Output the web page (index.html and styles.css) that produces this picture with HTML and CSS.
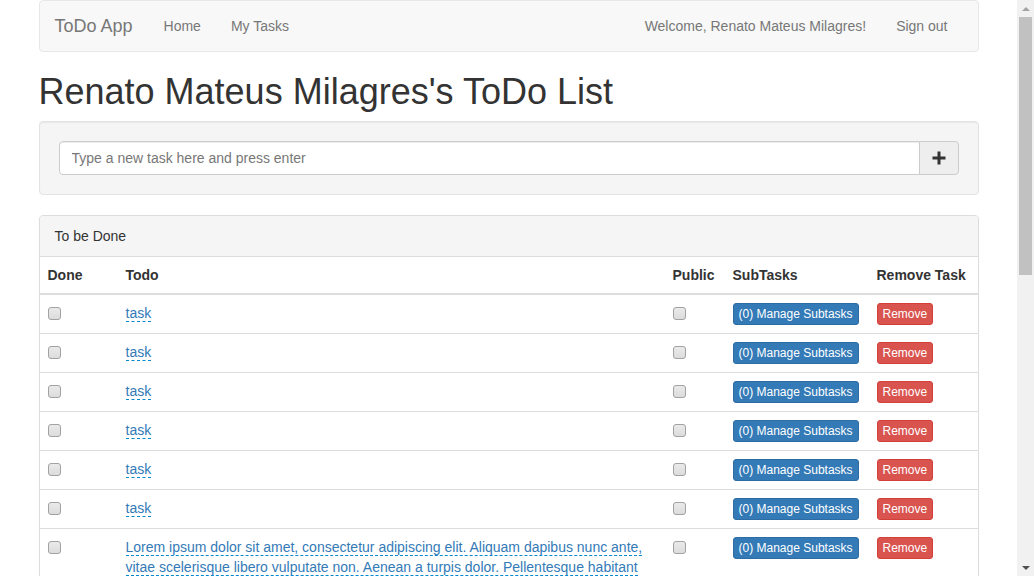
FILE: index.html
```html
<!DOCTYPE html>
<html lang="en">
<head>
<meta charset="utf-8">
<title>ToDo App</title>
<link rel="stylesheet" href="styles.css">
</head>
<body>
<div class="viewport">
<div class="page">
<div class="container">
  <nav class="navbar">
    <div class="nav-group">
      <a class="brand" href="#">ToDo App</a>
      <a class="nav-link" href="#">Home</a>
      <a class="nav-link" href="#">My Tasks</a>
    </div>
    <div class="nav-group">
      <span class="nav-link">Welcome, Renato Mateus Milagres!</span>
      <a class="nav-link" href="#">Sign out</a>
    </div>
  </nav>

  <h1 class="page-title">Renato Mateus Milagres's ToDo List</h1>

  <div class="well">
    <div class="input-group">
      <input class="form-control" type="text" placeholder="Type a new task here and press enter">
      <button class="btn-add" type="button" aria-label="Add">
        <svg width="14" height="14" viewBox="0 0 14 14"><path d="M5.5 0.5h3v5h5v3h-5v5h-3v-5h-5v-3h5z" fill="#333"/></svg>
      </button>
    </div>
  </div>

  <div class="panel">
    <div class="panel-heading">To be Done</div>
    <table class="table">
      <colgroup>
        <col class="c-done"><col class="c-todo"><col class="c-public"><col class="c-sub"><col class="c-remove">
      </colgroup>
      <thead>
        <tr><th>Done</th><th>Todo</th><th>Public</th><th>SubTasks</th><th>Remove Task</th></tr>
      </thead>
      <tbody>
        <tr><td><input type="checkbox" class="check"></td><td><a class="editable" href="#">task</a></td><td><input type="checkbox" class="check"></td><td><button class="btn btn-primary">(0) Manage Subtasks</button></td><td><button class="btn btn-danger">Remove</button></td></tr>
        <tr><td><input type="checkbox" class="check"></td><td><a class="editable" href="#">task</a></td><td><input type="checkbox" class="check"></td><td><button class="btn btn-primary">(0) Manage Subtasks</button></td><td><button class="btn btn-danger">Remove</button></td></tr>
        <tr><td><input type="checkbox" class="check"></td><td><a class="editable" href="#">task</a></td><td><input type="checkbox" class="check"></td><td><button class="btn btn-primary">(0) Manage Subtasks</button></td><td><button class="btn btn-danger">Remove</button></td></tr>
        <tr><td><input type="checkbox" class="check"></td><td><a class="editable" href="#">task</a></td><td><input type="checkbox" class="check"></td><td><button class="btn btn-primary">(0) Manage Subtasks</button></td><td><button class="btn btn-danger">Remove</button></td></tr>
        <tr><td><input type="checkbox" class="check"></td><td><a class="editable" href="#">task</a></td><td><input type="checkbox" class="check"></td><td><button class="btn btn-primary">(0) Manage Subtasks</button></td><td><button class="btn btn-danger">Remove</button></td></tr>
        <tr><td><input type="checkbox" class="check"></td><td><a class="editable" href="#">task</a></td><td><input type="checkbox" class="check"></td><td><button class="btn btn-primary">(0) Manage Subtasks</button></td><td><button class="btn btn-danger">Remove</button></td></tr>
        <tr><td><input type="checkbox" class="check"></td><td><a class="editable" href="#">Lorem ipsum dolor sit amet, consectetur adipiscing elit. Aliquam dapibus nunc ante, vitae scelerisque libero vulputate non. Aenean a turpis dolor. Pellentesque habitant morbi tristique senectus et netus et malesuada fames ac turpis egestas. Nulla facilisi. Vestibulum ante ipsum primis in faucibus orci luctus et ultrices posuere cubilia curae; Integer vel lorem sed nisi elementum tincidunt.</a></td><td><input type="checkbox" class="check"></td><td><button class="btn btn-primary">(0) Manage Subtasks</button></td><td><button class="btn btn-danger">Remove</button></td></tr>
        <tr><td><input type="checkbox" class="check"></td><td><a class="editable" href="#">task</a></td><td><input type="checkbox" class="check"></td><td><button class="btn btn-primary">(0) Manage Subtasks</button></td><td><button class="btn btn-danger">Remove</button></td></tr>
      </tbody>
    </table>
  </div>
</div>
</div>
<div class="scrollbar" aria-hidden="true">
  <div class="sb-arrow sb-up"></div>
  <div class="sb-track"><div class="sb-thumb"></div></div>
  <div class="sb-arrow sb-down"></div>
</div>
</div>
</body>
</html>
```

FILE: styles.css
```css
* { box-sizing: border-box; }

html, body { margin: 0; padding: 0; }

body {
  font-family: "Liberation Sans", Arial, Helvetica, sans-serif;
  font-size: 14px;
  line-height: 20px;
  color: #333;
  background: #fff;
}

.viewport {
  display: flex;
  height: 576px;
  overflow: hidden;
}
.page {
  flex: 1;
  min-width: 0;
  overflow: hidden;
}

/* fake browser scrollbar */
.scrollbar {
  width: 17px;
  flex: none;
  display: flex;
  flex-direction: column;
  background: #f1f1f1;
}
.sb-arrow {
  height: 17px;
  display: flex;
  align-items: center;
  justify-content: center;
}
.sb-up::before {
  content: "";
  border-left: 4px solid transparent;
  border-right: 4px solid transparent;
  border-bottom: 4px solid #a3a3a3;
}
.sb-down::before {
  content: "";
  border-left: 4px solid transparent;
  border-right: 4px solid transparent;
  border-top: 4px solid #505050;
}
.sb-track { flex: 1; }
.sb-thumb {
  width: 13px;
  height: 258px;
  margin-left: 2px;
  background: #c1c1c1;
}

.container {
  width: 970px;
  margin: 0 auto;
  padding: 0 15px;
}

/* Navbar */
.navbar {
  display: flex;
  justify-content: space-between;
  min-height: 52px;
  padding: 0 15px 0 0;
  margin-bottom: 20px;
  background: #f8f8f8;
  border: 1px solid #e7e7e7;
  border-radius: 4px;
}
.nav-group { display: flex; }
.brand {
  padding: 15px 16px 15px 15px;
  font-size: 18px;
  line-height: 20px;
  color: #777;
  text-decoration: none;
}
.nav-link {
  padding: 15px;
  line-height: 20px;
  color: #777;
  text-decoration: none;
}

.page-title {
  margin: 20px 0 9px;
  font-size: 36px;
  font-weight: 500;
  line-height: 40px;
  color: #333;
}

/* Well */
.well {
  padding: 19px;
  margin-bottom: 20px;
  background: #f5f5f5;
  border: 1px solid #e3e3e3;
  border-radius: 4px;
  box-shadow: inset 0 1px 1px rgba(0,0,0,.05);
}
.input-group { display: flex; }
.form-control {
  flex: 1;
  height: 34px;
  padding: 6px 12px;
  font-family: inherit;
  font-size: 14px;
  color: #555;
  background: #fff;
  border: 1px solid #ccc;
  border-radius: 4px 0 0 4px;
  box-shadow: inset 0 1px 1px rgba(0,0,0,.075);
  outline: none;
}
.form-control::placeholder { color: #777; }
.btn-add {
  display: flex;
  align-items: center;
  justify-content: center;
  width: 40px;
  height: 34px;
  margin-left: -1px;
  padding: 0;
  background: #eee;
  border: 1px solid #ccc;
  border-radius: 0 4px 4px 0;
}

/* Panel */
.panel {
  margin-bottom: 20px;
  background: #fff;
  border: 1px solid #ddd;
  border-radius: 4px;
  box-shadow: 0 1px 1px rgba(0,0,0,.05);
}
.panel-heading {
  padding: 10px 15px;
  background: #f5f5f5;
  border-bottom: 1px solid #ddd;
  border-radius: 3px 3px 0 0;
  color: #333;
}

.table {
  width: 100%;
  table-layout: fixed;
  border-collapse: collapse;
  border-spacing: 0;
}
.c-done { width: 78px; }
.c-todo { width: 547px; }
.c-public { width: 60px; }
.c-sub { width: 144px; }
.c-remove { width: 109px; }

.table th {
  padding: 8px;
  text-align: left;
  font-weight: bold;
  line-height: 20px;
  vertical-align: bottom;
  border-bottom: 2px solid #ddd;
  white-space: nowrap;
}
.table td {
  padding: 8px;
  line-height: 20px;
  vertical-align: top;
  border-top: 1px solid #ddd;
}
.table tbody tr:first-child td { border-top: 0; }

.editable {
  color: #337ab7;
  text-decoration: none;
  border-bottom: 1px dashed #08c;
}

.check {
  -webkit-appearance: none;
  appearance: none;
  display: block;
  width: 13px;
  height: 13px;
  margin: 4px 0 0;
  background: linear-gradient(#eaeaea, #dcdcdc);
  border: 1px solid #a2a2a2;
  border-radius: 3px;
}

.btn {
  display: inline-block;
  padding: 1px 5px;
  font-family: inherit;
  font-size: 12px;
  line-height: 18px;
  color: #fff;
  border: 1px solid transparent;
  border-radius: 3px;
  white-space: nowrap;
  cursor: pointer;
}
.btn-primary { background: #337ab7; border-color: #2e6da4; }
.btn-danger { background: #d9534f; border-color: #d43f3a; }
```
